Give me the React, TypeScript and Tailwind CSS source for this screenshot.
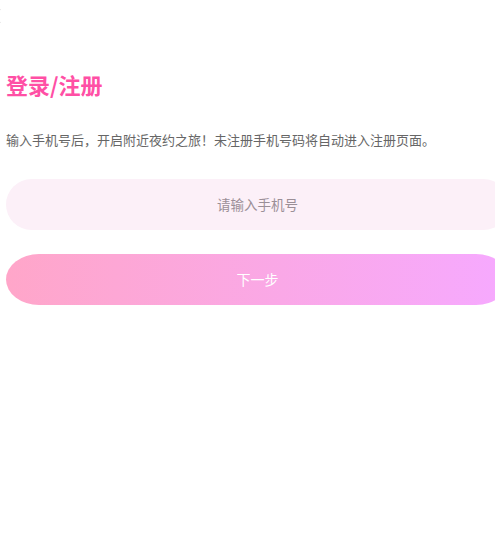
import React from "react";

export default function App() {
  return (
    <div
      className="relative w-[495px] h-[538px] overflow-hidden bg-white"
      style={{ fontFamily: '"Noto Sans CJK SC", "Noto Sans", sans-serif' }}
    >
      <svg className="absolute left-[-12px] top-[7px]" width="14" height="18" viewBox="0 0 14 18">
        <polyline points="12,2 4,9 12,16" fill="none" stroke="#c8c8c8" strokeWidth="2" />
      </svg>
      <div className="pt-[69px] pl-[6px]">
        <h1 className="text-[22px] leading-[30px] font-bold text-[#ff4fa5]">登录/注册</h1>
        <p className="mt-[31px] text-[13px] leading-[20px] text-[#666666]">
          输入手机号后，开启附近夜约之旅！未注册手机号码将自动进入注册页面。
        </p>
        <div className="mt-[29px] w-[503px] h-[51px] rounded-full bg-[#fcf0f8] flex items-center justify-center">
          <input
            className="w-full bg-transparent text-center text-[13.5px] text-[#333] placeholder:text-[#9b8f97] outline-none"
            placeholder="请输入手机号"
          />
        </div>
        <button className="mt-[24px] w-[503px] h-[51px] rounded-[33px/25.5px] bg-linear-to-r from-[#ffa6c9] to-[#f6a9ff] text-white text-[14px] flex items-center justify-center">
          下一步
        </button>
      </div>
    </div>
  );
}
